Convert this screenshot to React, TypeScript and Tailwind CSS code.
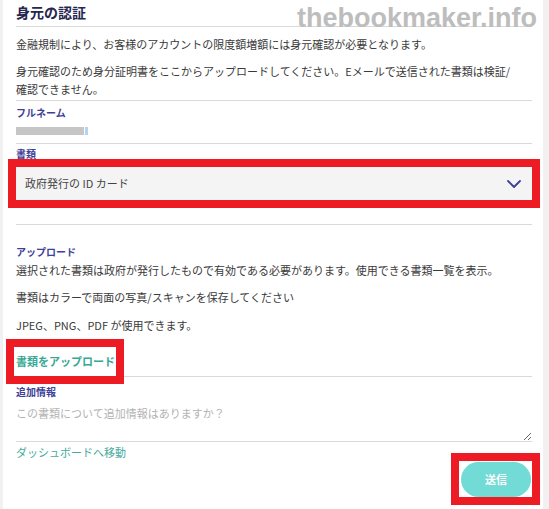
import React from "react"

const labelCls = "text-[10px] leading-[14px] font-bold text-[#3f3f98]"
const bodyCls = "text-[11px] leading-[18px] text-[#3a3a3a]"

const App: React.FC = () => {
    return (
        <div className="min-h-[509px] w-full bg-[#f1f1f1] font-['Noto_Sans_CJK_JP',sans-serif]">
            <div className="relative ml-[3px] w-[540px] min-h-[509px] bg-white pl-[13px] pr-[11px]">
                {/* watermark */}
                <div className="absolute left-[294px] top-[5px] text-[27px] leading-[27px] font-bold text-[#bdbdbd] font-['Liberation_Sans',sans-serif] pointer-events-none">
                    thebookmaker.info
                </div>

                <h2 className="h-[27px] border-b border-[#d9d9d9] text-[14px] leading-[24px] font-bold text-[#26264f]">
                    身元の認証
                </h2>

                <div className="pt-[8px] pb-[2px] border-b border-[#d9d9d9]">
                    <p className={bodyCls}>金融規制により、お客様のアカウントの限度額増額には身元確認が必要となります。</p>
                    <p className={`${bodyCls} mt-[9px]`}>
                        身元確認のため身分証明書をここからアップロードしてください。Eメールで送信された書類は検証/
                        <br />
                        確認できません。
                    </p>
                </div>

                <div className="pt-[5px] pb-[8px] border-b border-[#d9d9d9]">
                    <div className={labelCls}>フルネーム</div>
                    <div className="mt-[7px] flex items-center h-[8px]">
                        <div className="w-[68px] h-[8px] bg-[#c6c6c6]" />
                        <div className="ml-[1px] w-[3px] h-[8px] bg-[#b4d2f2]" />
                    </div>
                </div>

                <div className="pt-[3px] pb-[24px] border-b border-[#d9d9d9]">
                    <div className={labelCls}>書類</div>
                    <div className="mt-[6px] h-[33px] flex items-center justify-between bg-[#f4f4f4] pl-[9px] pr-[11px] outline-8 outline-[#ed1c24]">
                        <span className="text-[11px] text-[#444]">政府発行の ID カード</span>
                        <svg width="14" height="8" viewBox="0 0 14 8" fill="none">
                            <path d="M1 1L7 7L13 1" stroke="#3f3f98" strokeWidth="1.8" strokeLinecap="round" strokeLinejoin="round" />
                        </svg>
                    </div>
                </div>

                <div className="pt-[20px] border-b border-[#d9d9d9]">
                    <div className={labelCls}>アップロード</div>
                    <p className={`${bodyCls} mt-[2px]`}>選択された書類は政府が発行したもので有効である必要があります。使用できる書類一覧を表示。</p>
                    <p className={`${bodyCls} mt-[9px]`}>書類はカラーで両面の写真/スキャンを保存してください</p>
                    <p className={`${bodyCls} mt-[10px]`}>JPEG、PNG、PDF が使用できます。</p>
                    <div className="mt-[13px] -ml-[2px] w-[102px] h-[29px] flex items-center pl-[2px] bg-white outline-8 outline-[#ed1c24]">
                        <span className="text-[11px] font-bold text-[#38a894]">書類をアップロード</span>
                    </div>
                </div>

                <div className="pt-[8px] border-b border-[#d9d9d9]">
                    <div className={labelCls}>追加情報</div>
                    <textarea
                        className="mt-[3px] block w-full h-[39px] pt-[2px] resize-y bg-transparent outline-none text-[11px] leading-[18px] text-[#444] placeholder:text-[#b3b3b3]"
                        placeholder="この書類について追加情報はありますか？"
                    />
                </div>

                <div className="pt-[2px]">
                    <div className="text-[11px] leading-[17px] text-[#45ab9c]">ダッシュボードへ移動</div>
                    <div className="flex justify-end">
                        <div className="w-[73px] h-[36px] bg-white pl-[2px] pt-[1px] outline-8 outline-[#ed1c24]">
                            <button className="w-[70px] h-[35px] rounded-full bg-[#72dbd6] text-white text-[11px] font-bold">
                                送信
                            </button>
                        </div>
                    </div>
                </div>
            </div>
        </div>
    )
}

export default App
